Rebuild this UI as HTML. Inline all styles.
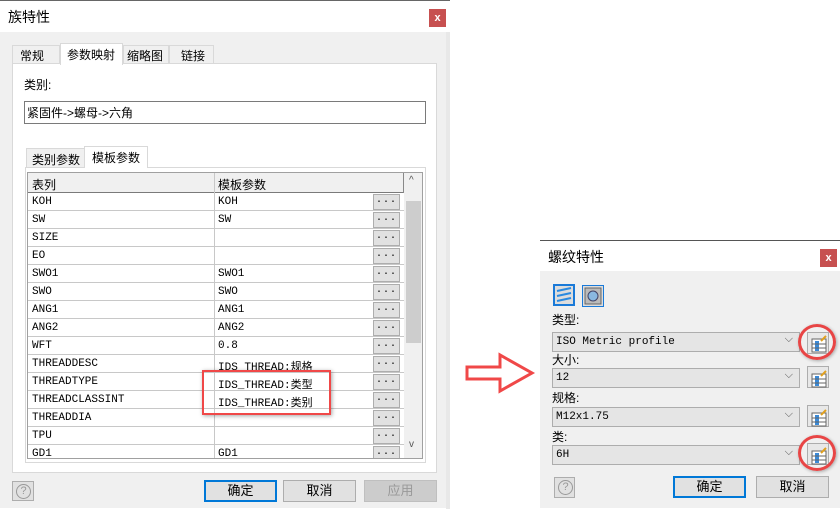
<!DOCTYPE html>
<html><head><meta charset="utf-8"><style>
*{box-sizing:border-box;margin:0;padding:0}
body{width:840px;height:508px;background:#fff;position:relative;overflow:hidden;font-family:"Liberation Sans","Noto Sans CJK SC",sans-serif;font-size:12px;color:#000}
.abs{position:absolute}
.mono{font-family:"Liberation Mono","Noto Sans CJK SC",monospace;font-size:11px}
.close{background:#c75050;color:#fff;font-weight:bold;font-size:11px;text-align:center;line-height:18px;width:17px;height:18px}
.btn{background:#e1e1e1;border:1px solid #adadad;text-align:center;font-size:13px}
.row{position:absolute;left:0;width:376px;height:18px;border-bottom:1px solid #c8c8c8}
.row span{position:absolute;top:3px}
.dots{position:absolute;left:345px;top:1px;width:27px;height:16px;background:#e1e1e1;border:1px solid #adadad;font-size:10px;text-align:center;line-height:12px;letter-spacing:1px}
.combo{position:absolute;left:12px;width:248px;height:20px;background:#e5e5e5;border:1px solid #adadad;font-family:"Liberation Mono",monospace;font-size:11px;line-height:18px;padding-left:3px}
.combo:after{content:"⌵";position:absolute;right:6px;top:-2px;color:#555;font-size:11px}
.ib{position:absolute;left:267px;width:22px;height:22px;background:#e8e8e8;border:1px solid #adadad}
.ring{position:absolute;left:258px;width:38px;height:36px;border:3px solid #e84545;border-radius:50%;box-shadow:1px 1px 3px rgba(0,0,0,.3)}
.help{border:1px solid #adadad;background:#e1e1e1}
.help div{position:absolute;left:3px;top:2px;width:15px;height:15px;border:1px solid #999;border-radius:50%;color:#999;font-size:11px;text-align:center;line-height:13px}
</style></head><body>
<div class="abs" style="left:0;top:0;width:450px;height:508px;background:#f0f0f0;border-top:1px solid #666">
 <div class="abs" style="left:0;top:0;width:450px;height:31px;background:#fff"></div>
 <div class="abs" style="left:8px;top:6px;font-size:14px">族特性</div>
 <div class="abs close" style="left:429px;top:8px">x</div>
 <div class="abs" style="left:446px;top:31px;width:4px;height:477px;background:#e8e8e8"></div>
 <div class="abs" style="left:12px;top:44px;width:48px;height:19px;border:1px solid #d9d9d9;border-bottom:none;background:#f0f0f0;padding:1px 0 0 7px;font-size:12px">常规</div>
 <div class="abs" style="left:60px;top:42px;width:63px;height:22px;border:1px solid #d9d9d9;border-bottom:none;background:#fff;padding:2px 0 0 6px;font-size:12px;z-index:2">参数映射</div>
 <div class="abs" style="left:123px;top:44px;width:46px;height:19px;border:1px solid #d9d9d9;border-bottom:none;padding:1px 0 0 3px">缩略图</div>
 <div class="abs" style="left:169px;top:44px;width:45px;height:19px;border:1px solid #d9d9d9;border-bottom:none;padding:1px 0 0 11px">链接</div>
 <div class="abs" style="left:12px;top:62px;width:425px;height:410px;background:#fff;border:1px solid #d9d9d9"></div>
 <div class="abs" style="left:24px;top:75px">类别:</div>
 <div class="abs" style="left:24px;top:100px;width:402px;height:23px;border:1px solid #7a7a7a;padding:2px 0 0 2px">紧固件-&gt;螺母-&gt;六角</div>
 <div class="abs" style="left:26px;top:147px;width:59px;height:19px;border:1px solid #d9d9d9;border-bottom:none;background:#f0f0f0;padding:2px 0 0 5px">类别参数</div>
 <div class="abs" style="left:84px;top:145px;width:64px;height:22px;border:1px solid #d9d9d9;border-bottom:none;background:#fff;padding:2px 0 0 7px;z-index:2">模板参数</div>
 <div class="abs" style="left:25px;top:166px;width:401px;height:296px;border:1px solid #d9d9d9"></div>
 <div class="abs" style="left:27px;top:171px;width:396px;height:287px;border:1px solid #a0a0a0;background:#fff;overflow:hidden">
  <div class="abs" style="left:0;top:0;width:376px;height:20px;background:#f0f0f0;border-bottom:1px solid #7a7a7a"></div>
  <div class="abs" style="left:186px;top:0;width:1px;height:287px;background:#c8c8c8"></div>
  <div class="abs" style="left:375px;top:0;width:2px;height:20px;background:#888"></div>
  <div class="abs" style="left:4px;top:3px">表列</div><div class="abs" style="left:190px;top:3px">模板参数</div>
  <div class="mono">
  <div class="row" style="top:20px"><span style="left:4px">KOH</span><span style="left:190px">KOH</span><div class="dots">...</div></div>
  <div class="row" style="top:38px"><span style="left:4px">SW</span><span style="left:190px">SW</span><div class="dots">...</div></div>
  <div class="row" style="top:56px"><span style="left:4px">SIZE</span><div class="dots">...</div></div>
  <div class="row" style="top:74px"><span style="left:4px">EO</span><div class="dots">...</div></div>
  <div class="row" style="top:92px"><span style="left:4px">SWO1</span><span style="left:190px">SWO1</span><div class="dots">...</div></div>
  <div class="row" style="top:110px"><span style="left:4px">SWO</span><span style="left:190px">SWO</span><div class="dots">...</div></div>
  <div class="row" style="top:128px"><span style="left:4px">ANG1</span><span style="left:190px">ANG1</span><div class="dots">...</div></div>
  <div class="row" style="top:146px"><span style="left:4px">ANG2</span><span style="left:190px">ANG2</span><div class="dots">...</div></div>
  <div class="row" style="top:164px"><span style="left:4px">WFT</span><span style="left:190px">0.8</span><div class="dots">...</div></div>
  <div class="row" style="top:182px"><span style="left:4px">THREADDESC</span><span style="left:190px">IDS_THREAD:规格</span><div class="dots">...</div></div>
  <div class="row" style="top:200px"><span style="left:4px">THREADTYPE</span><span style="left:190px">IDS_THREAD:类型</span><div class="dots">...</div></div>
  <div class="row" style="top:218px"><span style="left:4px">THREADCLASSINT</span><span style="left:190px">IDS_THREAD:类别</span><div class="dots">...</div></div>
  <div class="row" style="top:236px"><span style="left:4px">THREADDIA</span><div class="dots">...</div></div>
  <div class="row" style="top:254px"><span style="left:4px">TPU</span><div class="dots">...</div></div>
  <div class="row" style="top:272px"><span style="left:4px">GD1</span><span style="left:190px">GD1</span><div class="dots">...</div></div>
  </div>
  <div class="abs" style="left:376px;top:0;width:18px;height:287px;background:#f0f0f0"></div>
  <div class="abs" style="left:378px;top:28px;width:15px;height:142px;background:#cdcdcd"></div>
  <div class="abs" style="left:381px;top:2px;font-size:10px;color:#555">^</div>
  <div class="abs" style="left:381px;top:266px;font-size:10px;color:#555">v</div>
 </div>
 <div class="abs" style="left:202px;top:369px;width:129px;height:45px;border:2px solid #f04848;box-shadow:1px 1px 4px rgba(0,0,0,.35)"></div>
 <div class="abs help" style="left:12px;top:480px;width:22px;height:20px"><div>?</div></div>
 <div class="abs btn" style="left:204px;top:479px;width:73px;height:22px;border:2px solid #0078d7;line-height:18px">确定</div>
 <div class="abs btn" style="left:283px;top:479px;width:73px;height:22px;line-height:20px">取消</div>
 <div class="abs btn" style="left:364px;top:479px;width:73px;height:22px;line-height:20px;color:#999;background:#ccc;border-color:#bfbfbf">应用</div>
</div>
<svg class="abs" style="left:460px;top:350px" width="80" height="50"><path d="M7 17 H40 V5 L72 23 L40 41 V29 H7 Z" fill="#fff" stroke="#f04848" stroke-width="3"/></svg>
<div class="abs" style="left:540px;top:240px;width:300px;height:268px;background:#f0f0f0;border-top:1px solid #555">
 <div class="abs" style="left:0;top:0;width:300px;height:30px;background:#fff"></div>
 <div class="abs" style="left:8px;top:6px;font-size:14px">螺纹特性</div>
 <div class="abs close" style="left:280px;top:8px">x</div>
 <div class="abs" style="left:13px;top:43px;width:22px;height:22px;border:2px solid #1a7ad8;background:#ddd"><svg width="18" height="18"><path d="M2 5 L16 2 M2 10 L16 7 M2 15 L16 12" stroke="#2a8ae0" stroke-width="2"/></svg></div>
 <div class="abs" style="left:42px;top:44px;width:22px;height:22px;border:1px solid #1a7ad8;background:#ddd"><svg width="20" height="20"><rect x="2" y="2" width="16" height="16" fill="#bbb" stroke="#666"/><circle cx="10" cy="10" r="5" fill="#8ab8e0" stroke="#446"/></svg></div>
 <div class="abs" style="left:12px;top:70px">类型:</div>
 <div class="combo" style="top:91px">ISO Metric profile</div>
 <div class="abs" style="left:12px;top:110px">大小:</div>
 <div class="combo" style="top:127px">12</div>
 <div class="abs" style="left:12px;top:148px">规格:</div>
 <div class="combo" style="top:166px">M12x1.75</div>
 <div class="abs" style="left:12px;top:187px">类:</div>
 <div class="combo" style="top:204px">6H</div>
 <div class="ib" style="top:91px"></div><div class="ib" style="top:125px"></div><div class="ib" style="top:164px"></div><div class="ib" style="top:202px"></div>
 <svg class="abs" style="left:270px;top:94px" width="18" height="130"><g id="g"><rect x="2" y="4" width="14" height="13" fill="#fff" stroke="#666"/><rect x="5" y="6" width="4" height="10" fill="#3a8ad8"/><path d="M2 9H16M2 13H16" stroke="#666"/><path d="M11 6 L16 1" stroke="#e0a020" stroke-width="2"/></g><use href="#g" y="35"/><use href="#g" y="74"/><use href="#g" y="112"/></svg>
 <div class="ring" style="top:83px"></div>
 <div class="ring" style="top:194px"></div>
 <div class="abs help" style="left:14px;top:236px;width:21px;height:21px"><div>?</div></div>
 <div class="abs btn" style="left:133px;top:235px;width:73px;height:22px;border:2px solid #0078d7;line-height:18px">确定</div>
 <div class="abs btn" style="left:216px;top:235px;width:73px;height:22px;line-height:20px">取消</div>
</div>
</body></html>
